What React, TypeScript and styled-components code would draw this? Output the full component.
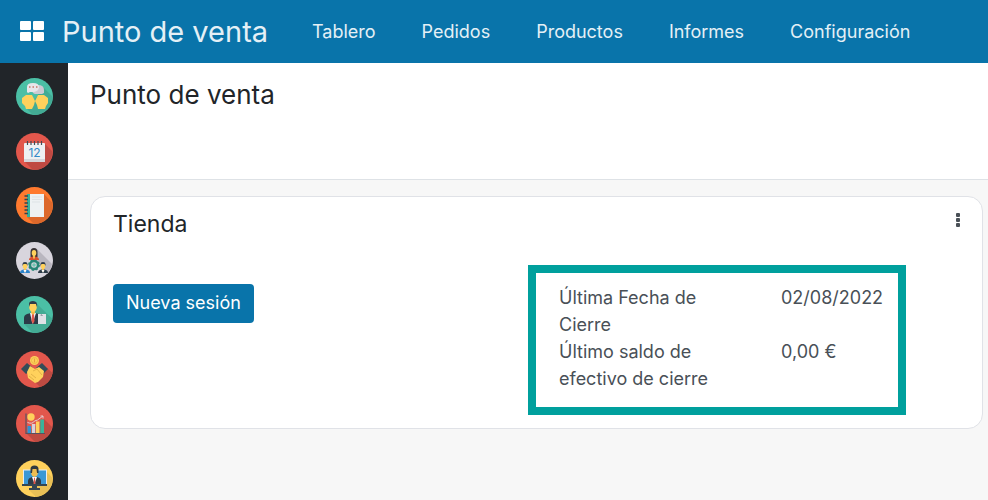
import React from "react";
import styled, { createGlobalStyle } from "styled-components";

const GlobalStyle = createGlobalStyle`
  * { box-sizing: border-box; }
  body {
    margin: 0;
    background: #f7f7f7;
    color: #212529;
    font-family: Inter, "Open Sans", sans-serif;
    font-size: 18px;
  }
  button { font: inherit; }
`;

const Page = styled.div`
  display: flex;
  flex-direction: column;
  height: 100vh;
  overflow: hidden;
`;

const TopBar = styled.header`
  display: flex;
  align-items: center;
  flex: none;
  height: 63px;
  padding: 0 20px;
  background: #0974aa;
  color: #e4f0f6;
`;

const AppsButton = styled.button`
  display: flex;
  padding: 0;
  margin-right: 18px;
  border: 0;
  background: none;
  cursor: pointer;
`;

const Brand = styled.a`
  width: 250px;
  color: inherit;
  font-size: 29px;
  line-height: 40px;
  text-decoration: none;
  white-space: nowrap;
`;

const Menu = styled.nav`
  display: flex;
  gap: 46px;
`;

const MenuLink = styled.a`
  color: inherit;
  line-height: 28px;
  text-decoration: none;
`;

const Body = styled.div`
  display: flex;
  flex: 1;
  min-height: 0;
`;

const Rail = styled.nav`
  flex: none;
  width: 68px;
  padding: 15px 0 0 16px;
  background: #212529;
`;

const RailList = styled.div`
  display: flex;
  flex-direction: column;
  justify-content: space-between;
  height: 419px;
`;

const RailLink = styled.a`
  display: block;
  width: 37px;
  height: 37px;
`;

const Main = styled.main`
  flex: 1;
  min-width: 0;
`;

const Heading = styled.div`
  height: 117px;
  padding: 12px 22px;
  border-bottom: 1px solid #dee2e6;
  background: #fff;
`;

const Title = styled.h1`
  margin: 0;
  font-size: 26px;
  font-weight: 400;
  line-height: 40px;
`;

const Board = styled.div`
  padding: 16px 5px 16px 22px;
`;

const Card = styled.article`
  padding: 9px 22px 13px;
  border: 1px solid #e0e2e7;
  border-radius: 15px;
  background: #fff;
`;

const CardTop = styled.div`
  display: flex;
  justify-content: space-between;
  align-items: flex-start;
`;

const CardTitle = styled.h2`
  margin: 0;
  font-size: 23px;
  font-weight: 400;
  line-height: 36px;
`;

const MoreButton = styled.button`
  display: flex;
  padding: 7px 0;
  border: 0;
  background: none;
  color: #495057;
  cursor: pointer;
`;

const CardContent = styled.div`
  display: grid;
  grid-template-columns: minmax(0, 415fr) minmax(0, 378fr);
  align-items: start;
  padding: 23px 54px 0 0;
`;

const PrimaryButton = styled.button`
  justify-self: start;
  margin-top: 19px;
  padding: 5px 13px 6px;
  border: 0;
  border-radius: 4px;
  background: #0974aa;
  color: #fff;
  line-height: 28px;
  cursor: pointer;
`;

const Highlight = styled.section`
  padding: 11px 12px 15px 23px;
  border: 8px solid #00a09d;
`;

const Facts = styled.dl`
  display: grid;
  grid-template-columns: 168px 1fr;
  column-gap: 54px;
  margin: 0;
  color: #495057;
  line-height: 27px;
`;

const FactValue = styled.dd`
  margin: 0;
  white-space: nowrap;
`;

type DiscProps = { color: string; shade: string; shadow: string; children: React.ReactNode };

const Disc = ({ color, shade, shadow, children }: DiscProps) => (
  <svg width="37" height="37" viewBox="0 0 37 37" aria-hidden="true">
    <circle cx="18.5" cy="18.5" r="18.5" fill={color} />
    <path d={shadow} fill={shade} />
    {children}
  </svg>
);

const Messages = () => (
  <Disc color="#4bbfa5" shade="#43ab94" shadow="M27 9 36.500 18.500A18.500 18.500 0 0 1 17 37L10 30 20 20z">
    <path d="M18 9q0-2 4-2 6 0 6 5v3l-2 1h-7q-3-1-3-4z" fill="#cdcad3" />
    <path d="M11 14V9q0-4 6-4t6 4-5 5h-4l-2 1z" fill="#e8e6eb" />
    <path d="M13 9h1.500M16.500 9H18M20 9h1.500" stroke="#c77768" strokeWidth="1.300" />
    <path d="M10 17h6l2 4 1 2-1 4-2 4H10l-1-3-3-3v-5z" fill="#ffd15c" />
    <path d="M28 17h-6l-2 4-1 2 2 4 1 4h7l1-3 2-3v-5z" fill="#ffd15c" />
  </Disc>
);

const CalendarDisc = () => (
  <Disc color="#e2574c" shade="#bf4a43" shadow="M29 11 36.500 18.500A18.500 18.500 0 0 1 17 37L9 29z">
    <rect x="8" y="10" width="21" height="19" rx="1" fill="#eef0f2" />
    <path d="M8 26h21v2.500l-1 .5H9l-1-.5z" fill="#d5d6db" />
    <path d="M11.500 8v4M15 8v4M18.500 8v4M22 8v4M25.500 8v4" stroke="#454b54" strokeWidth="1.200" />
    <text x="18.500" y="24" textAnchor="middle" fontSize="12" fontFamily="Inter, sans-serif" fill="#3389c8">12</text>
  </Disc>
);

const NotebookDisc = () => (
  <Disc color="#ff7a2f" shade="#dc682b" shadow="M28 7 36.500 16A18.500 18.500 0 0 1 18 37L11 30z">
    <path d="M11 7h5v23h-5z" fill="#36b09a" />
    <path d="M14 7h14v23H14z" fill="#edf1f3" />
    <path d="M16 10h10M16 12.500h10M16 15h8" stroke="#d7dce1" strokeWidth=".7" />
    <path d="M8.500 9H12M8.500 12.500H12M8.500 16H12M8.500 19.500H12M8.500 23H12M8.500 26.500H12" stroke="#344552" strokeWidth="1.400" />
  </Disc>
);

const Member = ({ x, y, coat, woman }: { x: number; y: number; coat: string; woman?: boolean }) => (
  <g transform={`translate(${x} ${y})`}>
    {woman && <path d="M-3.500 4v-5q0-4 3.500-4t3.500 4v5z" fill="#3b3537" />}
    <path d="M-5 7q0-3 3.500-3.500h3Q5 4 5 7z" fill={coat} />
    <path d="M-1 2h2v3L0 6l-1-1z" fill="#f1bd4f" />
    <ellipse cx="0" cy="0" rx="2.300" ry="3" fill="#ffd15c" />
    {!woman && <path d="M-2.500 0v-2q0-2 2.500-2t2.500 2v2l-1-2h-3z" fill="#303c48" />}
    {!woman && <path d="m-1.500 4 1.500 3 1.500-3z" fill="#fff" />}
  </g>
);

const TeamDisc = () => (
  <Disc color="#d8d5dd" shade="#b9b6bf" shadow="M21 7 36 22A18.500 18.500 0 0 1 31 32L20 20z">
    <circle cx="18" cy="23" r="4" fill="none" stroke="#288676" strokeWidth="2.500" />
    <circle cx="18" cy="23" r="5" fill="none" stroke="#288676" strokeWidth="1.800" strokeDasharray="2 1.927" />
    <circle cx="18" cy="23" r="1.800" fill="#70c7b2" />
    <Member x={18} y={11} coat="#d9512e" woman />
    <Member x={9} y={24} coat="#2c83c9" />
    <Member x={27} y={24} coat="#2b3b47" />
  </Disc>
);

const SellerDisc = () => (
  <Disc color="#4bbfa5" shade="#43ab94" shadow="M20 7 36.500 23A18.500 18.500 0 0 1 17 37L8 28z">
    <path d="M8 28v-6q0-3 3-4l4-1h4l4 1q2 1 2 4v6z" fill="#2b3b47" />
    <path d="m14 17 2.500 11L20 17z" fill="#f1f2f4" />
    <path d="m16 18 1-1 1 1 .5 7L17 28l-1.500-3z" fill="#e2574c" />
    <path d="M15 14h4v3l-2 2-2-2z" fill="#efbb48" />
    <ellipse cx="17" cy="11" rx="3.800" ry="5" fill="#ffd15c" />
    <path d="M13 11V8q0-3 4-3 5 0 4 6l-1-3h-6z" fill="#303c48" />
    <path d="M22 18h8v10h-8z" fill="#dfe1e6" />
    <path d="M25 20q0-3 1.500 0" stroke="#757e89" fill="none" strokeWidth=".8" />
  </Disc>
);

const DealDisc = () => (
  <Disc color="#e2574c" shade="#bd4b42" shadow="M31 17 36.500 22A18.500 18.500 0 0 1 24 36L18 30z">
    <path d="m5 18 6-6 6 5-7 6z" fill="#344c58" />
    <path d="m32 18-6-6-6 5 7 6z" fill="#344c58" />
    <path d="m14 15-3 6 1 6 7 5 3-1 5-5 1-6-5-4-4 2z" fill="#ffd15c" />
    <path d="m17 20 4-2 5 6M13 25l5 4M15 23l5 4" stroke="#dcaa42" strokeWidth=".8" fill="none" />
    <circle cx="18.500" cy="9.500" r="4.500" fill="#ffd15c" />
    <circle cx="18.500" cy="9.500" r="3" fill="none" stroke="#e5b642" strokeWidth=".8" />
    <path d="M18.500 7.500v4" stroke="#e5a63b" strokeWidth="1.200" />
  </Disc>
);

const ChartDisc = () => (
  <Disc color="#e2574c" shade="#bd4b42" shadow="M28 14 36 22A18.500 18.500 0 0 1 19 37L10 28z">
    <path d="M10 8.500v20h19" fill="none" stroke="#565361" strokeWidth="1.200" />
    <path d="M11.500 21H15v7h-3.500z" fill="#2d94d6" />
    <path d="M15.800 19h3.500v9h-3.500z" fill="#d6d3dc" />
    <path d="M20 16.500h3.500V28H20z" fill="#ffd15c" />
    <path d="M24.300 14.500h3.700V28h-3.700z" fill="#3bb49a" />
    <circle cx="15" cy="12" r="3.700" fill="#ffd15c" />
    <path d="M11.500 17.500q5 2 7-1.500l3-1 5.500-4m-2.500 0H27v2.500" fill="none" stroke="#e3ccd0" strokeWidth="1" />
  </Disc>
);

const ScreenDisc = () => (
  <Disc color="#ffd15c" shade="#e9c056" shadow="M31 12 36.500 18A18.500 18.500 0 0 1 20 37L13 30z">
    <path d="M7 9.500h24V24H7z" fill="#e9edf0" />
    <path d="M8 10.500h22V24H8z" fill="#3b98d5" />
    <path d="M12 24v-3q0-3 4-4h5q4 1 4 4v3z" fill="#2d3c48" />
    <path d="m16 17 2.500 7 2.500-7z" fill="#fff" />
    <path d="m18 18 .5-.5.5.5.5 6h-2z" fill="#e2574c" />
    <ellipse cx="18.500" cy="12" rx="3.500" ry="5" fill="#eebd51" />
    <path d="M14.500 13V9q0-3.500 4-3.500t4 3.500v4h-1.500l-.5-4h-4L16 13z" fill="#303940" />
    <path d="M6 24h25v2H6zM16 26h5v2h3v2H13v-2h3z" fill="#344652" />
  </Disc>
);

const apps = [
  { label: "Conversaciones", Icon: Messages },
  { label: "Calendario", Icon: CalendarDisc },
  { label: "Notas", Icon: NotebookDisc },
  { label: "Contactos", Icon: TeamDisc },
  { label: "CRM", Icon: SellerDisc },
  { label: "Ventas", Icon: DealDisc },
  { label: "Tableros", Icon: ChartDisc },
  { label: "Punto de venta", Icon: ScreenDisc },
];

const menuItems = ["Tablero", "Pedidos", "Productos", "Informes", "Configuración"];

export default function App() {
  return (
    <Page>
      <GlobalStyle />
      <TopBar>
        <AppsButton aria-label="Aplicaciones">
          <svg width="24" height="22" viewBox="0 0 24 22" fill="#fff" aria-hidden="true">
            <rect width="11" height="9" rx="1" />
            <rect x="13" width="11" height="9" rx="1" />
            <rect y="11" width="11" height="9" rx="1" />
            <rect x="13" y="11" width="11" height="9" rx="1" />
          </svg>
        </AppsButton>
        <Brand href="#">Punto de venta</Brand>
        <Menu>
          {menuItems.map((item) => (
            <MenuLink key={item} href="#">{item}</MenuLink>
          ))}
        </Menu>
      </TopBar>
      <Body>
        <Rail>
          <RailList>
            {apps.map(({ label, Icon }) => (
              <RailLink key={label} href="#" aria-label={label}>
                <Icon />
              </RailLink>
            ))}
          </RailList>
        </Rail>
        <Main>
          <Heading>
            <Title>Punto de venta</Title>
          </Heading>
          <Board>
            <Card>
              <CardTop>
                <CardTitle>Tienda</CardTitle>
                <MoreButton aria-label="Más opciones">
                  <svg width="4" height="14" viewBox="0 0 4 14" fill="currentColor" aria-hidden="true">
                    <rect width="4" height="4" rx="1" />
                    <rect y="5" width="4" height="4" rx="1" />
                    <rect y="10" width="4" height="4" rx="1" />
                  </svg>
                </MoreButton>
              </CardTop>
              <CardContent>
                <PrimaryButton>Nueva sesión</PrimaryButton>
                <Highlight>
                  <Facts>
                    <dt>Última Fecha de Cierre</dt>
                    <FactValue>02/08/2022</FactValue>
                    <dt>Último saldo de efectivo de cierre</dt>
                    <FactValue>0,00 €</FactValue>
                  </Facts>
                </Highlight>
              </CardContent>
            </Card>
          </Board>
        </Main>
      </Body>
    </Page>
  );
}
